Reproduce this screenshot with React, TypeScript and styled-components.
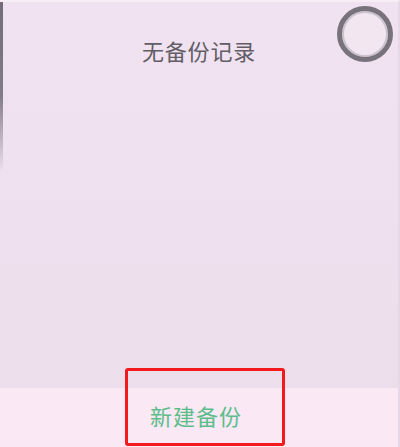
import React from "react";
import styled, { createGlobalStyle } from "styled-components";

const GlobalStyle = createGlobalStyle`
  html, body {
    margin: 0;
    padding: 0;
    background: #efe1ef;
  }
  body {
    font-family: "Noto Sans CJK SC", "Noto Sans", sans-serif;
  }
`;

const Screen = styled.div`
  position: relative;
  width: 400px;
  height: 447px;
  display: flex;
  flex-direction: column;
  overflow: hidden;
  background: #efe1ef;
  border-top: 2px solid #f6edf6;
  border-right: 2px solid #e6d8e6;
  box-sizing: border-box;
`;

const EdgeShadow = styled.div`
  position: absolute;
  left: 0;
  top: 0;
  width: 3px;
  height: 170px;
  background: linear-gradient(to bottom, #5c5864 0%, #6e6a75 55%, rgba(110, 106, 117, 0) 100%);
  opacity: 0.85;
`;

const Content = styled.main`
  flex: 1;
  display: flex;
  flex-direction: column;
  align-items: center;
  padding-top: 33px;
  background: linear-gradient(to bottom, #f0e2f0 0%, #eee0ee 60%, #ecdeeb 100%);
`;

const EmptyText = styled.div`
  font-size: 22px;
  line-height: 30px;
  font-weight: 400;
  letter-spacing: 0.8px;
  color: #625d66;
`;

const FloatButton = styled.div`
  position: absolute;
  top: 4px;
  right: 5px;
  width: 56px;
  height: 56px;
  border-radius: 50%;
  box-sizing: border-box;
  border: 5px solid #77727c;
  background: #f2e6f1;
  box-shadow: inset 0 0 0 2px #cbc4cd;
`;

const Footer = styled.footer`
  height: 59px;
  flex-shrink: 0;
  display: flex;
  align-items: center;
  justify-content: center;
  background: #fae8f5;
`;

const NewBackup = styled.button`
  border: none;
  background: none;
  padding: 0;
  margin: 0 0 6px -6px;
  font-family: inherit;
  font-size: 22px;
  line-height: 30px;
  font-weight: 400;
  letter-spacing: 1px;
  color: #5dbd8a;
`;

const Highlight = styled.div`
  position: absolute;
  left: 125px;
  top: 366px;
  width: 160px;
  height: 78px;
  box-sizing: border-box;
  border: 3px solid #f21a1a;
  border-radius: 3px;
`;

export default function App() {
  return (
    <>
      <GlobalStyle />
      <Screen>
        <Content>
          <EmptyText>无备份记录</EmptyText>
        </Content>
        <Footer>
          <NewBackup>新建备份</NewBackup>
        </Footer>
        <EdgeShadow />
        <FloatButton />
        <Highlight />
      </Screen>
    </>
  );
}
